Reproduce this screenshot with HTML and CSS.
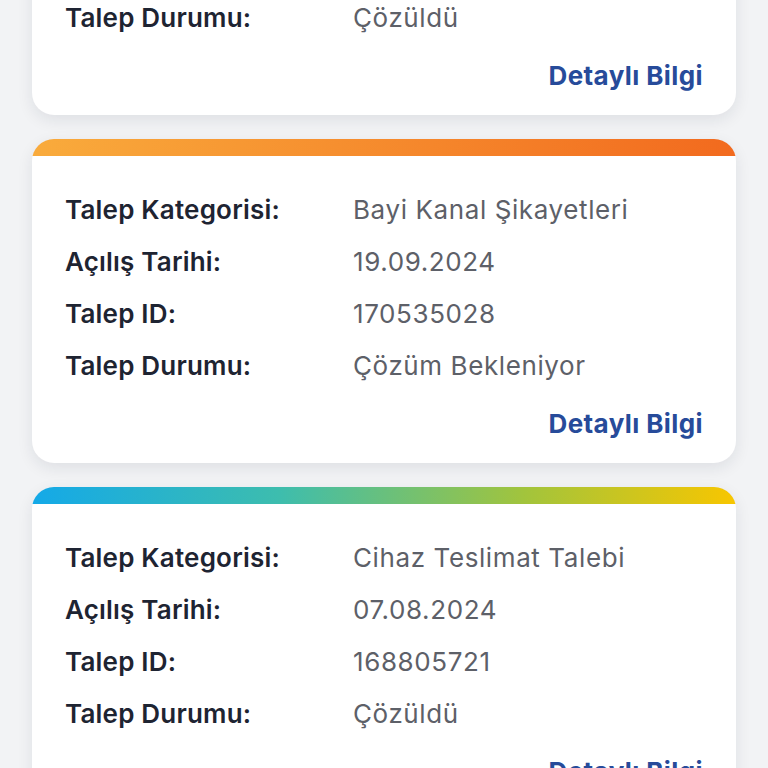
FILE: index.html
```html
<!DOCTYPE html>
<html lang="tr">
<head>
<meta charset="utf-8">
<link rel="stylesheet" href="styles.css">
</head>
<body>
<div class="list">
  <div class="card c-green">
    <div class="body">
      <div class="row"><span class="label">Talep Kategorisi:</span><span class="value">Fatura İtirazı</span></div>
      <div class="row"><span class="label">Açılış Tarihi:</span><span class="value">02.10.2024</span></div>
      <div class="row"><span class="label">Talep ID:</span><span class="value">171204455</span></div>
      <div class="row"><span class="label">Talep Durumu:</span><span class="value">Çözüldü</span></div>
      <div class="link">Detaylı Bilgi</div>
    </div>
  </div>
  <div class="card c-orange">
    <div class="body">
      <div class="row"><span class="label">Talep Kategorisi:</span><span class="value">Bayi Kanal Şikayetleri</span></div>
      <div class="row"><span class="label">Açılış Tarihi:</span><span class="value">19.09.2024</span></div>
      <div class="row"><span class="label">Talep ID:</span><span class="value">170535028</span></div>
      <div class="row"><span class="label">Talep Durumu:</span><span class="value">Çözüm Bekleniyor</span></div>
      <div class="link">Detaylı Bilgi</div>
    </div>
  </div>
  <div class="card c-rainbow">
    <div class="body">
      <div class="row"><span class="label">Talep Kategorisi:</span><span class="value">Cihaz Teslimat Talebi</span></div>
      <div class="row"><span class="label">Açılış Tarihi:</span><span class="value">07.08.2024</span></div>
      <div class="row"><span class="label">Talep ID:</span><span class="value">168805721</span></div>
      <div class="row"><span class="label">Talep Durumu:</span><span class="value">Çözüldü</span></div>
      <div class="link">Detaylı Bilgi</div>
    </div>
  </div>
</div>
</body>
</html>
```
FILE: styles.css
```css
html, body {
  margin: 0;
  padding: 0;
  background: #f2f3f5;
  height: 768px;
  overflow: hidden;
  font-family: "Inter", "Noto Sans", sans-serif;
}
.list {
  display: flex;
  flex-direction: column;
  gap: 24px;
  padding: 0 32px;
  margin-top: -209px;
}
.card {
  border-radius: 22px;
  box-shadow: 0 5px 16px rgba(20, 30, 50, 0.09);
  background-color: #fff;
  background-repeat: no-repeat;
  background-size: 100% 17px;
  background-position: top left;
}
.c-green { background-image: linear-gradient(90deg, #8bc34a, #4caf50); }
.c-orange { background-image: linear-gradient(90deg, #f9ab3c, #f26a1e); }
.c-rainbow { background-image: linear-gradient(90deg, #14a9e8 0%, #3dbdae 35%, #a2c43c 70%, #f8c600 100%); }
.body {
  padding: 44px 33px 13px 33px;
}
.row {
  display: flex;
  align-items: center;
  height: 52px;
  font-size: 26px;
}
.label {
  width: 288px;
  flex: none;
  font-weight: 600;
  color: #1e2432;
  letter-spacing: 0.2px;
}
.value {
  color: #5d6068;
  font-weight: 400;
  letter-spacing: 0.6px;
}
.link {
  margin-top: 7px;
  height: 52px;
  line-height: 52px;
  text-align: right;
  font-size: 26px;
  font-weight: 700;
  letter-spacing: 0.4px;
  color: #274b9a;
}
```
